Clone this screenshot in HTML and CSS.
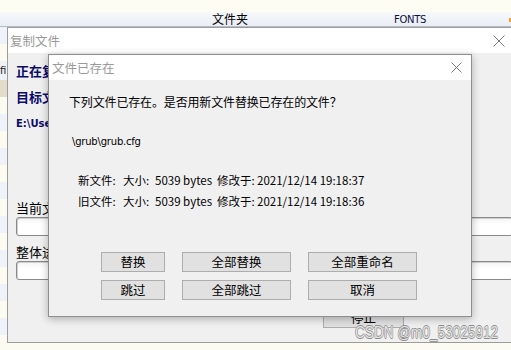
FILE: index.html
```html
<!DOCTYPE html>
<html lang="zh-CN">
<head>
<meta charset="utf-8">
<title>文件已存在</title>
<link rel="stylesheet" href="styles.css">
</head>
<body>
<div class="desk">
  <div class="topstrip"></div>
  <div class="colhead">
    <span class="col-folder">文件夹</span>
    <span class="col-fonts">FONTS</span>
    <span class="col-mark"></span>
  </div>
  <div class="rows">
    <div class="row"><span class="cell">fi</span></div>
    <div class="row sel"></div>
    <div class="row"></div>
    <div class="row"></div>
    <div class="row"></div>
    <div class="row"></div>
    <div class="row"></div>
    <div class="row"></div>
    <div class="row"></div>
    <div class="row"></div>
    <div class="row"></div>
    <div class="row"></div>
    <div class="row"></div>
    <div class="row"></div>
    <div class="row"></div>
    <div class="row"></div>
    <div class="row"></div>
  </div>
</div>

<div class="win win-copy">
  <div class="titlebar">
    <span class="title">复制文件</span>
    <span class="close"><svg width="12" height="12" viewBox="0 0 12 12"><path d="M0.5 0.5L11.5 11.5M11.5 0.5L0.5 11.5" stroke="#7a7a7a" stroke-width="1" fill="none"/></svg></span>
  </div>
  <div class="copy-body">
    <div class="lbl bold l1">正在复制文件</div>
    <div class="lbl bold l2">目标文件夹</div>
    <div class="lbl bold path">E:\Users\Administrator\Desktop</div>
    <div class="lbl l4">当前文件进度</div>
    <div class="bar"></div>
    <div class="lbl l5">整体进度</div>
    <div class="bar"></div>
    <div class="stop-row"><span class="btn stop">停止</span></div>
  </div>
</div>

<div class="win win-exist">
  <div class="titlebar">
    <span class="title">文件已存在</span>
    <span class="close"><svg width="11" height="11" viewBox="0 0 11 11"><path d="M0.5 0.5L10.5 10.5M10.5 0.5L0.5 10.5" stroke="#7a7a7a" stroke-width="1" fill="none"/></svg></span>
  </div>
  <div class="exist-body">
    <div class="question">下列文件已存在。是否用新文件替换已存在的文件？</div>
    <div class="fname">\grub\grub.cfg</div>
    <div class="info info-new"><span>新文件:</span><span>大小:</span><span>5039 bytes</span><span>修改于:</span><span>2021/12/14 19:18:37</span></div>
    <div class="info info-old"><span>旧文件:</span><span>大小:</span><span>5039 bytes</span><span>修改于:</span><span>2021/12/14 19:18:36</span></div>
    <div class="buttons">
      <span class="btn">替换</span>
      <span class="btn">全部替换</span>
      <span class="btn">全部重命名</span>
      <span class="btn">跳过</span>
      <span class="btn">全部跳过</span>
      <span class="btn">取消</span>
    </div>
  </div>
</div>

<div class="watermark">CSDN @m0_53025912</div>
</body>
</html>
```

FILE: styles.css
```css
* { box-sizing: border-box; }
html, body {
  margin: 0;
  padding: 0;
}
body {
  width: 511px;
  height: 350px;
  overflow: hidden;
  position: relative;
  background: #fcfbf1;
  font-family: "Noto Sans CJK SC", "Noto Sans", sans-serif;
  color: #000;
}

/* background file list */
.desk { width: 511px; }
.topstrip { height: 12px; background: #fefdf3; }
.colhead {
  height: 15px;
  background: linear-gradient(#f6f8fb, #e9eef5);
  border-bottom: 1px solid #b8bcc2;
  display: flex;
  align-items: flex-end;
  font-size: 12px;
  line-height: 14px;
}
.col-folder { margin-left: 212px; }
.col-fonts {
  margin-left: 146px;
  font-family: "DejaVu Sans", sans-serif;
  font-size: 10px;
  letter-spacing: -0.3px;
  color: #101040;
  line-height: 13px;
}
.col-mark {
  margin-left: auto;
  width: 2px;
  height: 4px;
  margin-bottom: 4px;
  background: #f0a030;
}
.rows { display: flex; flex-direction: column; }
.row {
  height: 17px;
  background: #fbfbf2;
  font-size: 11px;
  line-height: 17px;
}
.row:nth-child(even) { background: #eff2f8; }
.row.sel { background: #e2dcc8; }
.row:first-child {
  height: 53px;
  padding-top: 34px;
  background: linear-gradient(#eff2f8 0 17px, #fbfbf2 17px 34px, #eef1f6 34px);
}
.cell { font-family: "DejaVu Sans", sans-serif; font-size: 10px; color: #222; }

/* windows */
.win {
  position: absolute;
  background: #f0f0f0;
  border: 1px solid #9c9c9c;
  display: flex;
  flex-direction: column;
}
.titlebar {
  background: #fff;
  height: 25px;
  display: flex;
  align-items: center;
  flex: none;
}
.title {
  color: #9a9a9a;
  font-size: 12.5px;
  line-height: 16px;
}
.close { margin-left: auto; display: flex; }

.win-copy {
  left: 7px;
  top: 27px;
  width: 520px;
  height: 316px;
  border-right: none;
}
.win-copy .titlebar { padding-left: 2px; }
.win-copy .close { margin-right: 22px; }

.copy-body {
  padding-left: 8px;
  padding-right: 14px;
  display: flex;
  flex-direction: column;
}
.lbl {
  font-size: 13px;
  line-height: 16px;
  white-space: nowrap;
}
.bold { font-weight: bold; color: #0a0a6e; }
.l1 { margin-top: 10px; }
.l2 { margin-top: 10px; }
.path {
  margin-top: 12px;
  font-family: "DejaVu Sans", sans-serif;
  font-size: 10px;
  line-height: 13px;
}
.l4 { margin-top: 70px; }
.l5 { margin-top: 8px; }
.bar {
  margin-top: 1px;
  height: 19px;
  border: 1px solid #8a8a8a;
  border-radius: 3px;
  background: linear-gradient(#f4f4f4, #ffffff 40%);
  box-shadow: inset 1px 1px 0 #d0d0d0;
}
.stop-row {
  margin-top: 28px;
  padding-left: 307px;
  display: flex;
}
.btn {
  height: 20px;
  background: #e1e1e1;
  border: 1px solid #adadad;
  display: flex;
  align-items: center;
  justify-content: center;
  font-size: 12.5px;
  line-height: 16px;
}
.stop { width: 81px; }

.win-exist {
  left: 48px;
  top: 54px;
  width: 424px;
  height: 263px;
  border-color: #8f8f8f;
  box-shadow: 0 2px 8px rgba(0,0,0,0.28);
}
.win-exist .titlebar { padding-left: 3px; }
.win-exist .close { margin-right: 9px; }

.exist-body {
  padding-left: 20px;
  display: flex;
  flex-direction: column;
}
.question {
  margin-top: 14px;
  font-size: 12px;
  line-height: 16px;
  letter-spacing: -0.15px;
}
.fname {
  margin-top: 25px;
  margin-left: 3px;
  font-family: "DejaVu Sans", sans-serif;
  font-size: 10px;
  line-height: 13px;
  letter-spacing: -0.2px;
}
.info {
  font-size: 11.5px;
  line-height: 16px;
  margin-left: 9px;
  display: grid;
  grid-template-columns: 45px 32px 62px 40px auto;
  white-space: nowrap;
}
.info-new { margin-top: 24px; }
.info-old { margin-top: 5px; }
.buttons {
  margin-top: 43px;
  margin-left: 32px;
  display: grid;
  grid-template-columns: 64px 109px 109px;
  column-gap: 17px;
  row-gap: 8px;
}

.watermark {
  position: absolute;
  left: 355px;
  top: 323px;
  white-space: nowrap;
  font-family: "Liberation Sans", Arial, sans-serif;
  font-size: 16px;
  line-height: 20px;
  color: #e6e6e6;
  text-shadow: -0.6px 0 #8c8c8c, 0.6px 0 #8c8c8c, 0 -0.6px #8c8c8c, 0 0.6px #8c8c8c;
  transform: scaleX(0.85);
  transform-origin: left center;
}
```
